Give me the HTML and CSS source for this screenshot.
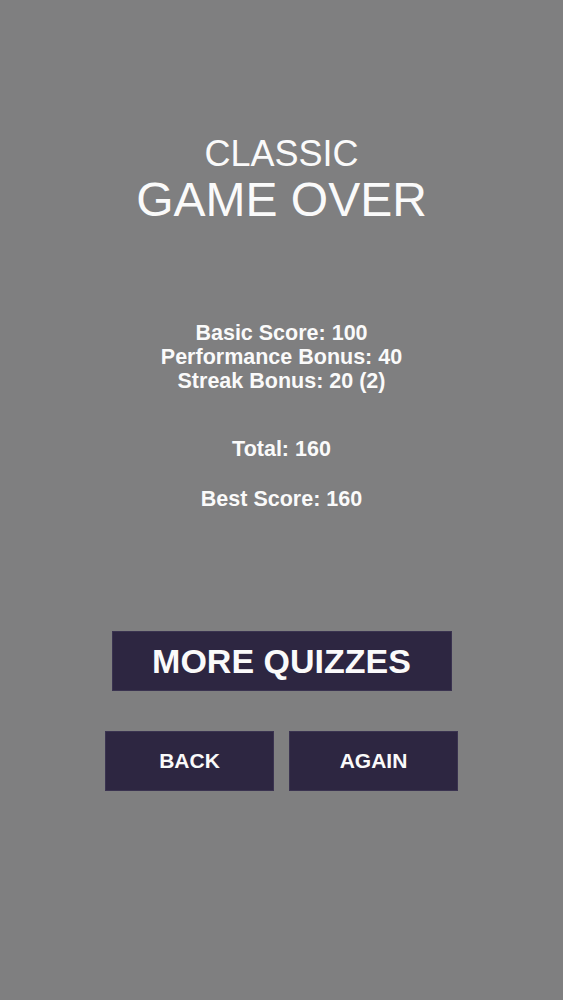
FILE: index.html
```html
<!DOCTYPE html>
<html lang="en">
<head>
    <meta charset="UTF-8">
    <meta name="viewport" content="width=device-width, initial-scale=1.0">
    <title>Game Over</title>
    <link rel="stylesheet" href="styles.css">
</head>
<body>
    <div class="screen">
        <div class="heading">
            <div class="mode">CLASSIC</div>
            <div class="title">GAME OVER</div>
        </div>

        <div class="stats">
            <p>Basic Score: 100</p>
            <p>Performance Bonus: 40</p>
            <p>Streak Bonus: 20 (2)</p>
        </div>

        <p class="total">Total: 160</p>
        <p class="best">Best Score: 160</p>

        <div class="actions">
            <button class="btn btn-wide">MORE QUIZZES</button>
            <div class="row">
                <button class="btn btn-small">BACK</button>
                <button class="btn btn-small">AGAIN</button>
            </div>
        </div>
    </div>
</body>
</html>
```

FILE: styles.css
```css
body {
    margin: 0;
    background: #7f7f80;
    font-family: "Liberation Sans", Arial, sans-serif;
    color: #fafafa;
}

.screen {
    display: flex;
    flex-direction: column;
    align-items: center;
    padding-top: 134px;
    min-height: 866px;
}

.heading {
    text-align: center;
}

.mode {
    font-size: 36px;
    line-height: 40px;
}

.title {
    font-size: 48px;
    line-height: 52px;
}

.stats,
.total,
.best {
    font-size: 21.5px;
    font-weight: bold;
    line-height: 24px;
    text-align: center;
}

.stats {
    margin-top: 95px;
}

.stats p {
    margin: 0;
}

.total {
    margin: 44px 0 0;
}

.best {
    margin: 26px 0 0;
}

.actions {
    width: 353px;
    margin-top: 120px;
    display: flex;
    flex-direction: column;
    align-items: center;
    gap: 40px;
}

.row {
    display: flex;
    gap: 15px;
    width: 100%;
}

.btn {
    height: 60px;
    border: none;
    background: #2d2641;
    color: #fafafa;
    font-family: "Liberation Sans", Arial, sans-serif;
    font-weight: bold;
    padding: 0;
    display: flex;
    align-items: center;
    justify-content: center;
    box-shadow: inset 0 0 0 1px #3a3350;
}

.btn-wide {
    width: 340px;
    font-size: 34px;
}

.btn-small {
    flex: 1;
    font-size: 21px;
}
```
